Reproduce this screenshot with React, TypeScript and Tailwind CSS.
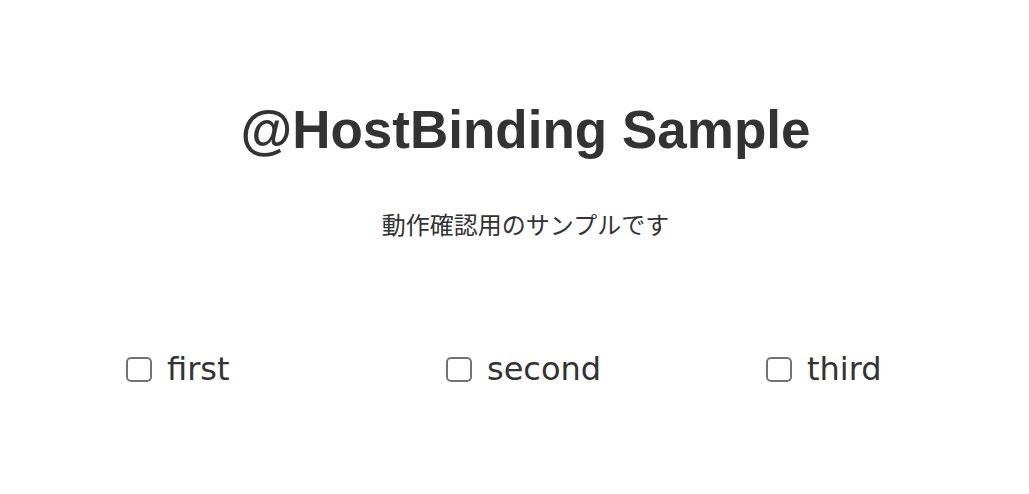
import React from "react";

const items = ["first", "second", "third"];

export default function App() {
  return (
    <div className="w-[1029px] h-[494px] overflow-hidden bg-white text-[#333333] flex flex-col pl-[22px]" style={{ fontFamily: '"Liberation Sans", "Noto Sans CJK JP", sans-serif' }}>
      <h1 className="mt-[99px] text-center text-[53px] leading-[62px] font-bold">@HostBinding Sample</h1>
      <p className="mt-[47px] text-center text-[24px] leading-[32px]" style={{ fontFamily: '"Noto Sans CJK JP", sans-serif' }}>動作確認用のサンプルです</p>
      <div className="mt-[109px] flex pl-[104px]">
        {items.map((t) => (
          <label key={t} className="w-[320px] last:w-auto shrink-0 flex items-center gap-[15px]">
            <span className="w-[26px] h-[25px] rounded-[5px] border-2 border-[#737373] bg-white shrink-0" />
            <span className="text-[32px] leading-[40px]" style={{ fontFamily: '"DejaVu Sans", sans-serif' }}>{t}</span>
          </label>
        ))}
      </div>
    </div>
  );
}
